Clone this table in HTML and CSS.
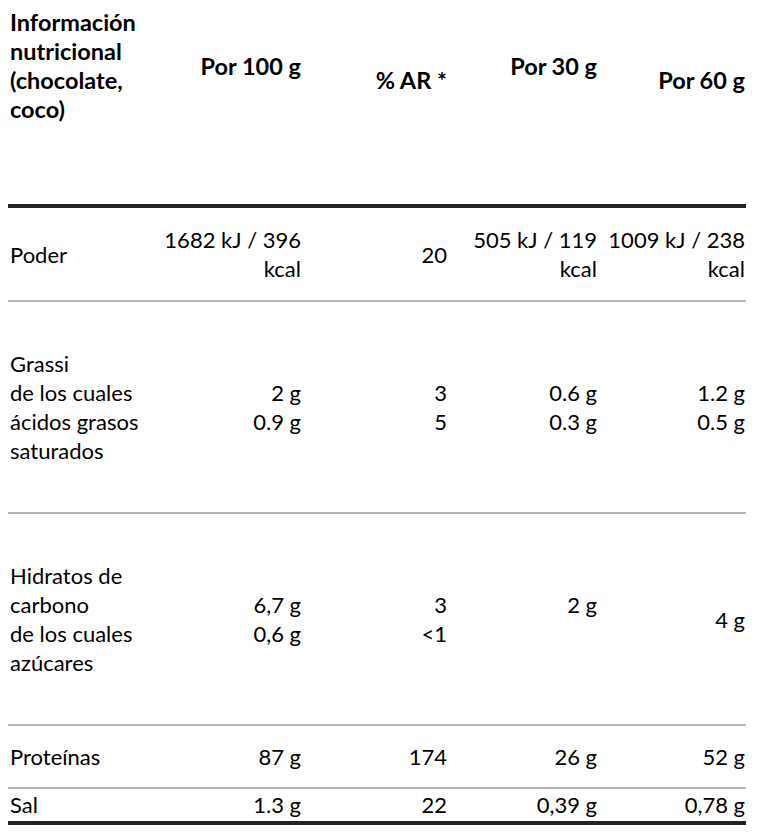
FILE: index.html
```html
<!DOCTYPE html>
<html lang="es">
<head>
<meta charset="utf-8">
<title>Información nutricional</title>
<link rel="stylesheet" href="styles.css">
</head>
<body>
<table class="nutri">
  <colgroup>
    <col class="c1"><col class="c2"><col class="c3"><col class="c4"><col class="c5">
  </colgroup>
  <thead>
    <tr>
      <th class="label">Información<br>nutricional<br>(chocolate,<br>coco)</th>
      <th>Por 100 g</th>
      <th><br>% AR *</th>
      <th>Por 30 g</th>
      <th><br>Por 60 g</th>
    </tr>
  </thead>
  <tbody>
    <tr class="r-energy">
      <td class="label">Poder</td>
      <td>1682 kJ / 396<br>kcal</td>
      <td>20</td>
      <td>505 kJ / 119<br>kcal</td>
      <td>1009 kJ / 238<br>kcal</td>
    </tr>
    <tr class="r-big">
      <td class="label">Grassi<br>de los cuales<br>ácidos grasos<br>saturados</td>
      <td>2 g<br>0.9 g</td>
      <td>3<br>5</td>
      <td>0.6 g<br>0.3 g</td>
      <td>1.2 g<br>0.5 g</td>
    </tr>
    <tr class="r-big">
      <td class="label">Hidratos de<br>carbono<br>de los cuales<br>azúcares</td>
      <td>6,7 g<br>0,6 g</td>
      <td>3<br>&lt;1</td>
      <td>2 g<br>&nbsp;</td>
      <td>4 g</td>
    </tr>
    <tr class="r-prot">
      <td class="label">Proteínas</td>
      <td>87 g</td>
      <td>174</td>
      <td>26 g</td>
      <td>52 g</td>
    </tr>
    <tr class="r-salt">
      <td class="label">Sal</td>
      <td>1.3 g</td>
      <td>22</td>
      <td>0,39 g</td>
      <td>0,78 g</td>
    </tr>
  </tbody>
</table>
</body>
</html>
```
FILE: styles.css
```css
body {
  margin: 8px;
  background: #ffffff;
  color: #000000;
  font-family: Lato, "Open Sans", "Liberation Sans", sans-serif;
  font-size: 22px;
}

.nutri {
  width: 738px;
  border-collapse: collapse;
  table-layout: fixed;
  line-height: 29px;
}

.c1 { width: 150px; }
.c2 { width: 144px; }
.c3 { width: 146px; }
.c4 { width: 150px; }
.c5 { width: 148px; }

.nutri th,
.nutri td {
  text-align: right;
  vertical-align: middle;
  white-space: nowrap;
  padding-left: 2px;
  padding-right: 1px;
}

.nutri .label {
  text-align: left;
}

.nutri th {
  font-weight: 700;
  font-size: 23.5px;
  padding-top: 0;
  padding-bottom: 80px;
  border-bottom: 4px solid #222222;
}

.nutri td {
  font-weight: 400;
  border-bottom: 2px solid #b4b4b4;
}

.r-energy td {
  padding-top: 17px;
  padding-bottom: 17px;
}

.r-big td {
  padding-top: 47px;
  padding-bottom: 47px;
}

.r-prot td {
  padding-top: 16px;
  padding-bottom: 16px;
}

.r-salt td {
  padding-top: 1px;
  padding-bottom: 2px;
  border-bottom: 4px solid #222222;
}
```
